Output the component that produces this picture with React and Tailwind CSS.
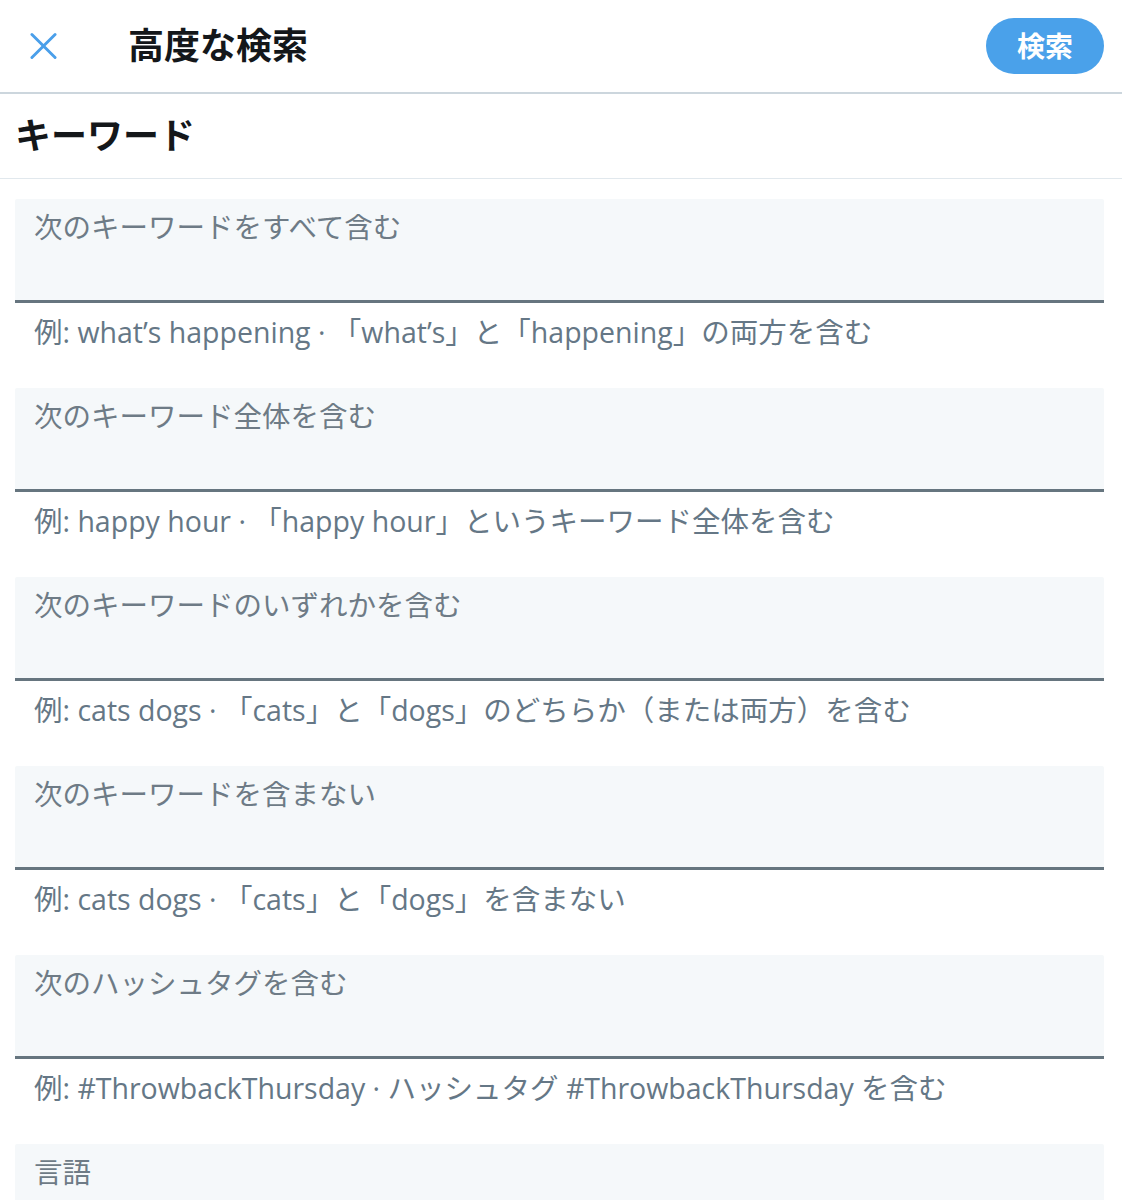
import React from 'react'

const font = { fontFamily: '"Open Sans", "Liberation Sans", "Noto Sans CJK JP", sans-serif' }

const fields = [
	{
		label: '次のキーワードをすべて含む',
		hint: '例: what’s happening · 「what’s」と「happening」の両方を含む',
	},
	{
		label: '次のキーワード全体を含む',
		hint: '例: happy hour · 「happy hour」というキーワード全体を含む',
	},
	{
		label: '次のキーワードのいずれかを含む',
		hint: '例: cats dogs · 「cats」と「dogs」のどちらか（または両方）を含む',
	},
	{
		label: '次のキーワードを含まない',
		hint: '例: cats dogs · 「cats」と「dogs」を含まない',
	},
	{
		label: '次のハッシュタグを含む',
		hint: '例: #ThrowbackThursday · ハッシュタグ #ThrowbackThursday を含む',
	},
]

function Field ({ label, hint }) {
	return (
		<div>
			<div className="h-[104px] bg-[#f5f8fa] border-b-[3px] border-[#66757f] px-[19px] pt-[11px] rounded-t-[2px]">
				<span className="text-[28.5px] leading-[34px] text-[#6e7b86]">{label}</span>
			</div>
			{hint && (
				<div className="h-[85px] px-[19px] pt-[12px]">
					<span className="text-[28.5px] leading-[34px] text-[#657786]">{hint}</span>
				</div>
			)}
		</div>
	)
}

export default function App () {
	return (
		<div className="w-[1122px] h-[1200px] overflow-hidden bg-white" style={font}>
			<div className="h-[94px] flex items-center border-b-2 border-[#ccd6dd]">
				<button className="ml-[30px] w-[27px] h-[27px] flex items-center justify-center">
					<svg width="28" height="28" viewBox="0 0 28 28" fill="none" stroke="#4a9fea" strokeWidth="3" strokeLinecap="round">
						<path d="M2 2 L26 26 M26 2 L2 26" />
					</svg>
				</button>
				<h1 className="ml-[71px] text-[36px] font-bold text-[#14171a] leading-none">高度な検索</h1>
				<button className="ml-auto mr-[18px] w-[118px] h-[56px] rounded-full bg-[#4aa1ea] text-white text-[28px] font-bold">
					検索
				</button>
			</div>

			<div className="h-[85px] flex items-center px-[15px] border-b border-[#e1e8ed]">
				<h2 className="text-[36px] font-bold text-[#14171a] leading-none">キーワード</h2>
			</div>

			<div className="pt-[20px] pl-[15px] pr-[18px]">
				{fields.map(f => (
					<Field key={f.label} label={f.label} hint={f.hint} />
				))}
				<Field label="言語" />
			</div>
		</div>
	)
}
